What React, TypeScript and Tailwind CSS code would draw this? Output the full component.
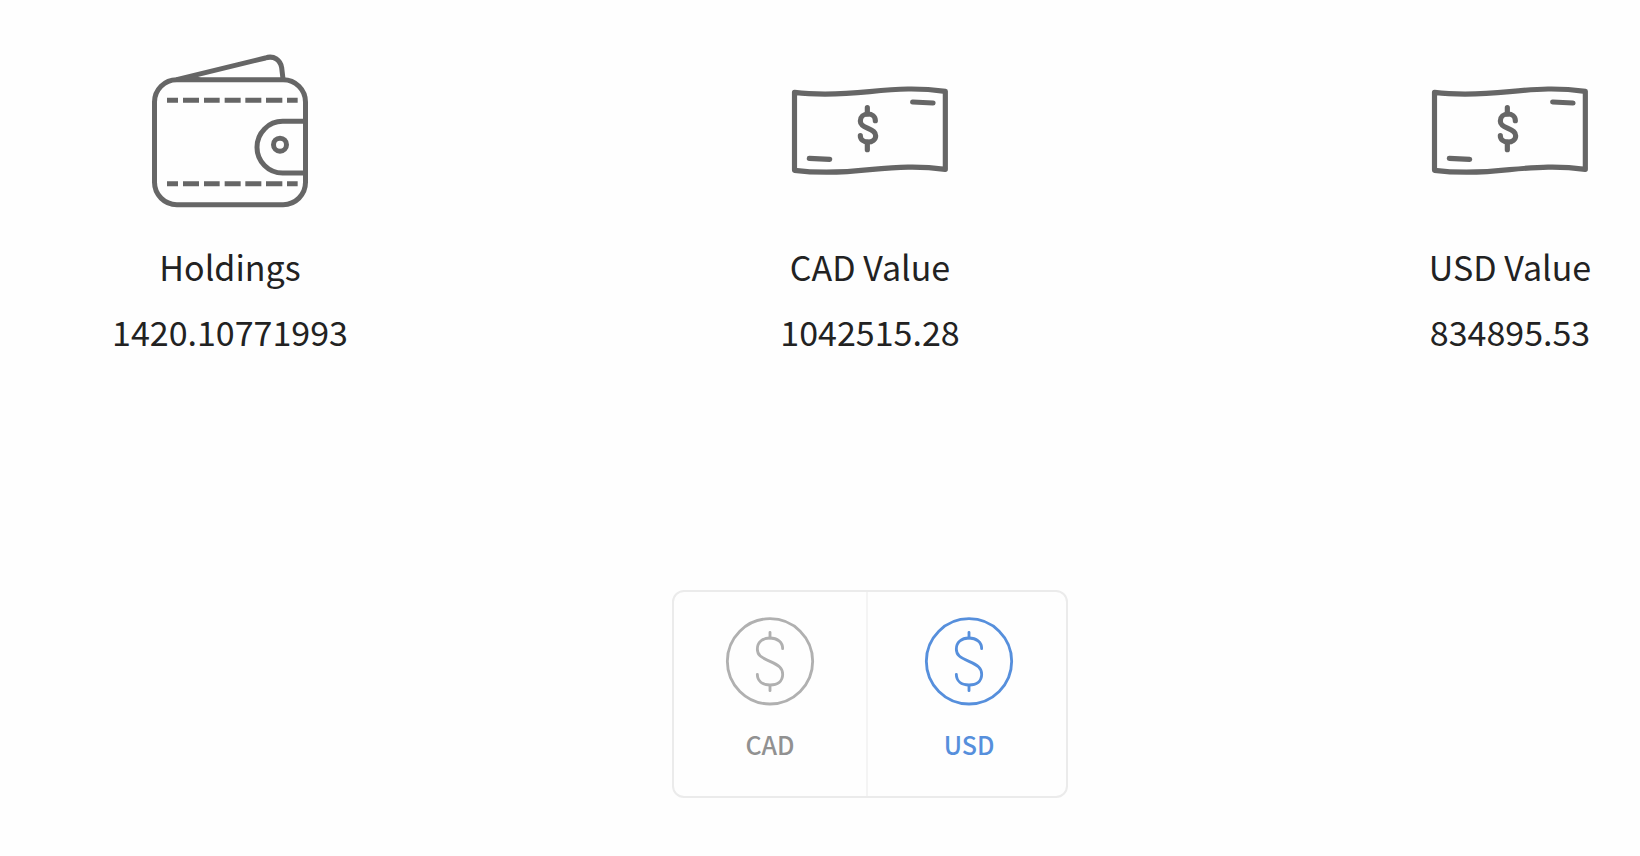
import { useState } from "react";

function WalletIcon() {
  return (
    <svg viewBox="0 0 600 540" className="h-[180px] w-[200px]" fill="none" stroke="#666" strokeWidth="15" aria-hidden="true">
      <rect x="73.500" y="119" width="453" height="375" rx="67" />
      <path d="M140 119 L406 54 C432 45 451 61 455 83 L459 117" />
      <path d="M140 118 L196 106 L220 118 Z" fill="#666" stroke="none" />
      <path d="M526 244 H458 A77 77.500 0 0 0 458 399 H526" />
      <circle cx="450" cy="314" r="19.500" />
      {[181, 431].map((y) => (
        <path
          key={y}
          d={`M111 ${y}H144M159 ${y}H207M222 ${y}H269M284 ${y}H332M346 ${y}H394M408 ${y}H457M471 ${y}H503`}
        />
      ))}
    </svg>
  );
}

function BanknoteIcon() {
  return (
    <svg viewBox="0 -90 600 540" className="h-[180px] w-[200px]" fill="none" stroke="#666" strokeWidth="15.500" strokeLinecap="round" strokeLinejoin="round" aria-hidden="true">
      <path d="M73.500 67 C145 76 216 73 299 65 C385 56 445 53 526 64 V298 C445 287 385 291 299 299 C216 308 145 310 73.500 301 Z" />
      <path d="M428 96 L489 99 M118 265 L179 268" />
      <path d="M292 113 V132 M292 216 V239" />
      <path d="M316 152 C316 139 305 132 294 132 C281 132 271 141 271 153 C271 164 278 168 294 175 C310 182 317 187 317 197 C317 209 306 216 294 216 C281 216 271 208 271 197" />
    </svg>
  );
}

function DollarCircleIcon() {
  return (
    <svg viewBox="0 0 264 264" className="size-[88px] overflow-visible" fill="none" stroke="currentColor" strokeWidth="8.500" strokeLinecap="round" aria-hidden="true">
      <circle cx="132" cy="133" r="128" />
      <path d="M132 46 V63 M132 205 V221" />
      <path d="M170 95 C170 76 154 63 132 63 C109 63 94 76 94 96 C94 115 105 121 132 133 C159 145 170 153 170 172 C170 193 155 204 132 204 C109 204 94 192 94 172" />
    </svg>
  );
}

const stats = [
  { label: "Holdings", value: "1420.10771993", icon: WalletIcon },
  { label: "CAD Value", value: "1042515.28", icon: BanknoteIcon },
  { label: "USD Value", value: "834895.53", icon: BanknoteIcon },
];

export default function App() {
  const [currency, setCurrency] = useState("USD");

  return (
    <main className="min-h-screen bg-[#fefefe] pt-10 pr-[10px] pl-[110px] font-['Noto_Sans_CJK_SC','Noto_Sans',sans-serif] text-[#222]">
      <section className="flex justify-between">
        {stats.map(({ label, value, icon: Icon }) => (
          <div key={label} className="flex w-60 flex-col items-center text-[34px] leading-10">
            <Icon />
            <h2 className="mt-[27px]">{label}</h2>
            <p className="mt-[25px]">{value}</p>
          </div>
        ))}
      </section>

      <div role="group" aria-label="Currency" className="mx-auto mt-[238px] flex h-[208px] w-[396px] rounded-xl border-2 border-[#ebebeb]">
        <button
          type="button"
          aria-pressed={currency === "CAD"}
          onClick={() => setCurrency("CAD")}
          className={`flex w-[194px] flex-col items-center border-r-2 border-[#f4f4f4] pt-[25px] ${currency === "CAD" ? "text-[#568fdc]" : "text-[#b0b0b0]"}`}
        >
          <DollarCircleIcon />
          <span className={`mt-[23px] text-[25px] leading-8 font-medium ${currency === "CAD" ? "" : "text-[#919191]"}`}>CAD</span>
        </button>
        <button
          type="button"
          aria-pressed={currency === "USD"}
          onClick={() => setCurrency("USD")}
          className={`flex flex-1 flex-col items-center pt-[25px] pl-1 ${currency === "USD" ? "text-[#568fdc]" : "text-[#b0b0b0]"}`}
        >
          <DollarCircleIcon />
          <span className={`mt-[23px] text-[25px] leading-8 font-medium ${currency === "USD" ? "" : "text-[#919191]"}`}>USD</span>
        </button>
      </div>
    </main>
  );
}
